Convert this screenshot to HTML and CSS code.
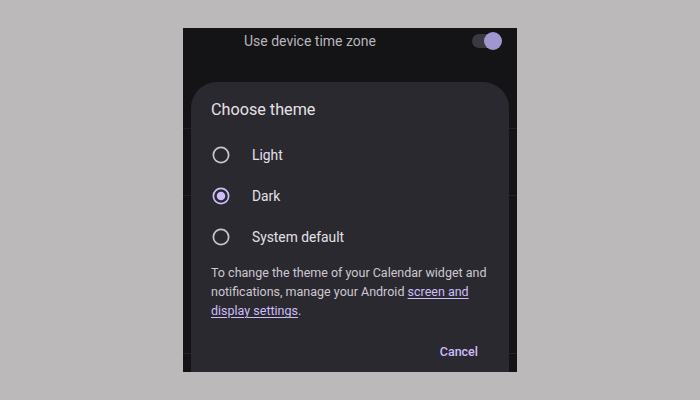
FILE: index.html
```html
<!DOCTYPE html>
<html lang="en">
<head>
    <meta charset="UTF-8">
    <meta name="viewport" content="width=device-width, initial-scale=1.0">
    <title>Calendar settings - Theme</title>
    <link rel="stylesheet" href="styles.css">
</head>
<body>
    <div class="stage">
        <div class="screen">
            <!-- settings list behind the dialog -->
            <div class="settings">
                <div class="setting-row first">
                    <span class="setting-label">Use device time zone</span>
                    <span class="switch"><span class="switch-thumb"></span></span>
                </div>
                <div class="setting-row medium"></div>
                <div class="setting-row tall"></div>
                <div class="setting-row"></div>
            </div>

            <div class="dialog">
                <h2 class="dialog-title">Choose theme</h2>
                <div class="options">
                    <label class="option">
                        <span class="radio"></span>
                        <span class="option-label">Light</span>
                    </label>
                    <label class="option">
                        <span class="radio checked"></span>
                        <span class="option-label">Dark</span>
                    </label>
                    <label class="option">
                        <span class="radio"></span>
                        <span class="option-label">System default</span>
                    </label>
                </div>
                <p class="dialog-note">To change the theme of your Calendar widget and notifications, manage your Android <a href="#">screen and display settings</a>.</p>
                <div class="dialog-actions">
                    <button class="text-button">Cancel</button>
                </div>
            </div>
        </div>
    </div>
</body>
</html>
```

FILE: styles.css
```css
body {
    margin: 0;
    padding: 0;
    background: #bbb9b9;
    font-family: Roboto, 'Noto Sans', sans-serif;
}

.stage {
    width: 700px;
    height: 400px;
    padding: 28px 0 0 183px;
    box-sizing: border-box;
}

.screen {
    position: relative;
    width: 334px;
    height: 344px;
    background: #141316;
    overflow: hidden;
}

/* background list */
.setting-row {
    border-bottom: 1px solid #232226;
    height: 66px;
}

.setting-row.first {
    height: 101px;
    display: flex;
    align-items: flex-start;
    justify-content: space-between;
    padding: 4px 17px 0 61px;
    box-sizing: border-box;
}

.setting-row.tall {
    height: 157px;
}

.setting-label {
    color: #b9b5bc;
    font-size: 14px;
    line-height: 18px;
}

.switch {
    position: relative;
    width: 28px;
    height: 14px;
    margin-top: 2px;
    border-radius: 7px;
    background: #3a3840;
}

.switch-thumb {
    position: absolute;
    right: -2px;
    top: -2px;
    width: 18px;
    height: 18px;
    border-radius: 50%;
    background: #a197d0;
}

/* dialog */
.dialog {
    position: absolute;
    left: 8px;
    right: 8px;
    top: 54px;
    bottom: -24px;
    background: #2b2930;
    border-radius: 26px;
    padding: 16px 16px 0 20px;
    color: #e6e1e6;
}

.dialog-title {
    margin: 0;
    font-size: 16.2px;
    font-weight: 400;
    line-height: 24px;
}

.options {
    margin-top: 12px;
}

.option {
    display: flex;
    align-items: center;
    height: 41px;
    gap: 21px;
}

.radio {
    width: 20px;
    height: 20px;
    box-sizing: border-box;
    border: 2px solid #cac4cf;
    border-radius: 50%;
    transform: scale(0.85);
    display: flex;
    align-items: center;
    justify-content: center;
}

.radio.checked {
    border-color: #cdbdfa;
}

.radio.checked::after {
    content: '';
    width: 10px;
    height: 10px;
    border-radius: 50%;
    background: #cdbdfa;
}

.option-label {
    font-size: 13.8px;
    color: #e4e0e6;
}

.dialog-note {
    margin: 6px 0 0;
    font-size: 12.5px;
    line-height: 19px;
    color: #cdc8d0;
}

.dialog-note a {
    color: #cdbdfa;
    text-decoration: underline;
    text-underline-offset: 2px;
}

.dialog-actions {
    display: flex;
    justify-content: flex-end;
    margin-top: 20px;
    padding-right: 15px;
}

.text-button {
    background: none;
    border: none;
    padding: 0;
    font-family: inherit;
    font-size: 12.5px;
    font-weight: 500;
    line-height: 24px;
    color: #cdbdfa;
}
```
